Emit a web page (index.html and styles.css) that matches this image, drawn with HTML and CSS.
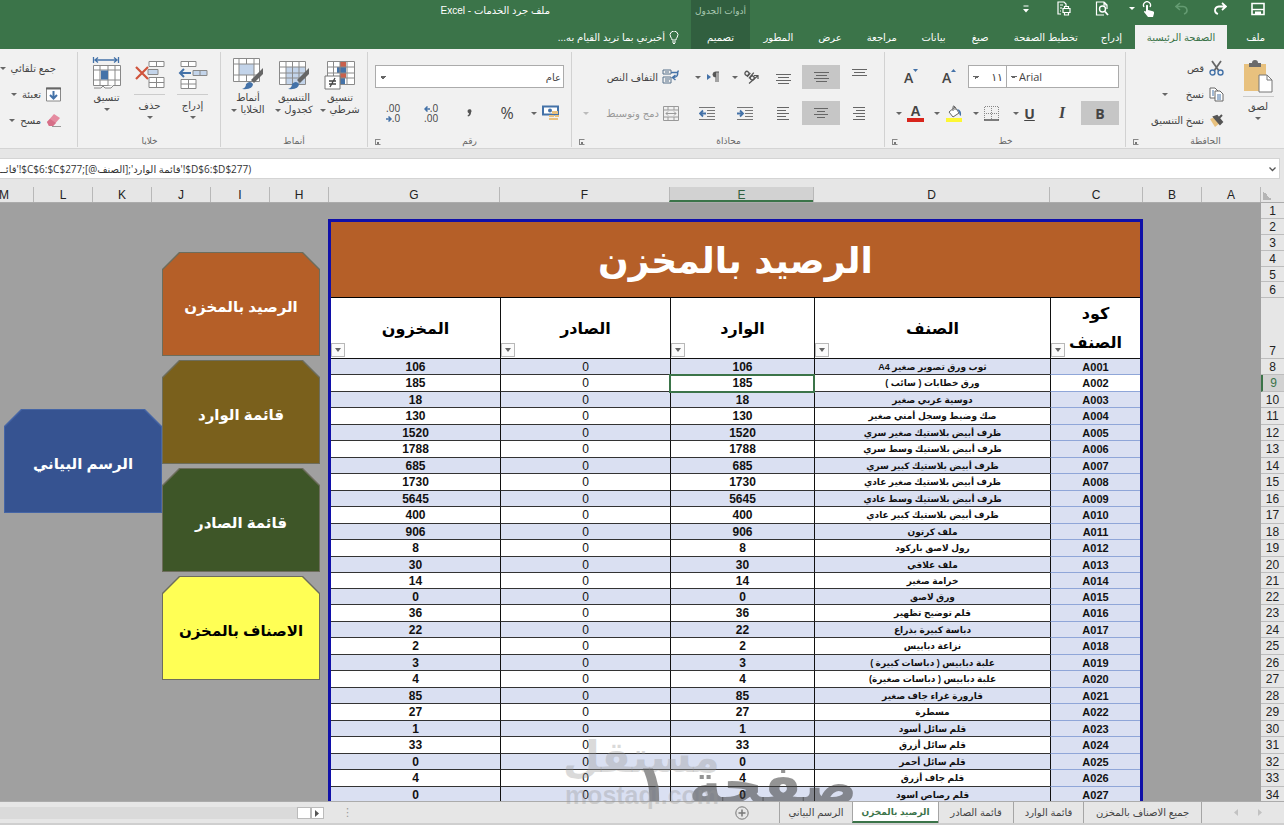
FILE: index.html
```html
<!DOCTYPE html>
<html lang="ar" dir="rtl">
<head>
<meta charset="utf-8">
<title>ملف جرد الخدمات - Excel</title>
<link rel="stylesheet" href="styles.css">
</head>
<body>
<div class="app">
<header class="top">
  <div class="qat">
    <button class="q" aria-label="حفظ"><svg width="14" height="14" viewBox="0 0 14 14"><path d="M1 1.5h12v11H1z" fill="none" stroke="#fff" stroke-width="1.6"/><path d="M1 7.5h12" stroke="#fff" stroke-width="1.4"/><path d="M4 9.5h6V13H4z" fill="#fff"/></svg></button>
    <button class="q" aria-label="إعادة"><svg width="14" height="14" viewBox="0 0 14 14"><path d="M9 1l4 3.5L9 8M13 4.500H6Q2 5 2 8.500Q2 11 5 12" fill="none" stroke="#fff" stroke-width="1.8"/></svg></button>
    <button class="q" aria-label="تراجع"><svg width="14" height="14" viewBox="0 0 14 14"><path d="M5 1L1 4.500L5 8M1 4.500H8Q12 5 12 8.500Q12 11 9 12" fill="none" stroke="#649b72" stroke-width="1.6"/></svg></button>
    <button class="q touch" aria-label="وضع اللمس"><svg width="14" height="16" viewBox="0 0 14 16"><path d="M2 6a3.500 3.500 0 1 1 6 0" fill="none" stroke="#fff" stroke-width="1.300"/><path d="M4 4.500q1-1.500 2 0V9l5 1.200q1.500.5 1 2.300L11 16H6L2 11q0-1.500 2-.5z" fill="#fff"/></svg><i class="caret"></i></button>
    <button class="q" aria-label="معاينة الطباعة"><svg width="14" height="15" viewBox="0 0 14 15"><path d="M9 1H1.500v13H9M9 1l3 3v4M9 1v3h3" fill="none" stroke="#fff" stroke-width="1.200"/><circle cx="7.500" cy="8" r="3" fill="none" stroke="#fff" stroke-width="1.400"/><path d="M10 10.500l3 3.500" stroke="#fff" stroke-width="1.800"/></svg></button>
    <button class="q" aria-label="طباعة سريعة"><svg width="14" height="15" viewBox="0 0 14 15"><path d="M4 13H1V1h6l2 2v2M3 4h3M3 7h2M3 10h1" fill="none" stroke="#fff" stroke-width="1.200"/><path d="M6 7.500h7v4H6zM7.500 7.500v-2h4v2M7.500 11v3h4v-3" fill="none" stroke="#fff" stroke-width="1.200"/></svg></button>
    <button class="q" aria-label="تخصيص"><svg width="6" height="8" viewBox="0 0 6 8"><path d="M.5 1h5" stroke="#fff"/><path d="M0 4h6L3 7.500z" fill="#fff"/></svg></button>
  </div>
  <div class="ctx ctx-name">أدوات الجدول</div>
  <h1 class="doc">ملف جرد الخدمات - Excel</h1>
  <nav class="tabs">
    <button class="tab w57">ملف</button><button class="tab w93 on">الصفحة الرئيسية</button><button class="tab w46">إدراج</button><button class="tab w85">تخطيط الصفحة</button><button class="tab w46">صيغ</button><button class="tab w46">بيانات</button><button class="tab w57">مراجعة</button><button class="tab w46">عرض</button><button class="tab w57">المطور</button>
  </nav>
  <button class="tab ctx">تصميم</button>
  <button class="tell"><svg width="10" height="13" viewBox="0 0 10 13"><path d="M3 9Q3 7.500 1.700 6A3.900 3.900 0 1 1 8.300 6Q7 7.500 7 9zM3 11h4M4 12.500h2" fill="none" stroke="#fff"/></svg>أخبرني بما تريد القيام به...</button>
</header>

<section class="ribbon">
  <div class="group g-clip">
    <div class="body side">
      <button class="big paste"><svg width="32" height="34" viewBox="0 0 32 34"><path d="M2 4h22v27H2z" fill="#e8c17e"/><path d="M7 3h3q0-3 3-3t3 3h3v4H7z" fill="#6b6b6b"/><path d="M17 15h8l5 5v12H17z" fill="#fff" stroke="#777"/><path d="M25 15v5h5" fill="none" stroke="#777"/></svg><span class="rule"></span>لصق<i class="caret"></i></button>
      <div class="stack">
        <button class="line"><svg width="15" height="16" viewBox="0 0 15 16"><path d="M3 1l7 10M12 1L5 11" stroke="#666" stroke-width="1.800"/><circle cx="3.500" cy="12.500" r="2.500" fill="none" stroke="#4472a8" stroke-width="1.400"/><circle cx="11.500" cy="12.500" r="2.500" fill="none" stroke="#4472a8" stroke-width="1.400"/></svg>قص</button>
        <button class="line"><svg width="15" height="15" viewBox="0 0 15 15"><path d="M1 1h5l3 3v7H1z" fill="#fff" stroke="#666"/><path d="M6 4h5l3 3v7H6z" fill="#fff" stroke="#666"/><path d="M3 4h2M3 6h2M3 8h2M8 8h4M8 10h4M8 12h4" stroke="#4472a8"/></svg>نسخ<i class="caret far"></i></button>
        <button class="line"><svg width="15" height="14" viewBox="0 0 15 14"><path d="M1 6l5-2 5 6-5 4z" fill="#e8c17e"/><path d="M5 4l6 7 2-2-5-6zM10 5l3-3" fill="#555" stroke="#555" stroke-width="2"/></svg>نسخ التنسيق</button>
      </div>
    </div>
    <h2 class="gname">الحافظة</h2><button class="launch" aria-label="خيارات الحافظة"></button>
  </div>

  <div class="group g-font">
    <div class="body">
      <div class="rowb">
        <select class="sel w113" dir="rtl" aria-label="الخط"><option>Arial</option></select><select class="sel w38" aria-label="حجم الخط"><option>١١</option></select>
        <button class="b gl sz" aria-label="تكبير الخط"><svg width="5" height="14" viewBox="0 0 5 14"><path d="M0 3L2.500 0L5 3z" fill="#4472a8"/></svg><span>A</span></button><button class="b gl sz" aria-label="تصغير الخط"><svg width="5" height="14" viewBox="0 0 5 14"><path d="M0 0h5L2.500 3z" fill="#4472a8"/></svg><span>A</span></button>
      </div>
      <div class="rowb">
        <button class="b on gl"><b>B</b></button><button class="b gl ser"><b>I</b></button><button class="b gl un"><b>U</b><i class="caret"></i></button>
        <button class="b" aria-label="حدود"><svg width="15" height="15" viewBox="0 0 15 15"><path d="M.5 14V.5h14V14M7.500 0v14M0 7.500h14" fill="none" stroke="#888" stroke-dasharray="1 1"/><path d="M0 14h15" stroke="#555" stroke-width="1.500"/></svg><i class="caret"></i></button>
        <button class="b" aria-label="لون التعبئة"><svg width="18" height="17" viewBox="0 0 18 17"><path d="M4 7l6-5 4 6-6 4z" fill="#fff" stroke="#666"/><path d="M8 6V1.500Q9 0 10 2v3" fill="none" stroke="#666"/><path d="M12 4q5 1 4 7-2-1-2-4z" fill="#4472a8"/><path d="M1 13h16v4H1z" fill="#fdf733"/></svg><i class="caret"></i></button>
        <button class="b" aria-label="لون الخط"><span class="fc">A</span><i class="caret"></i></button>
      </div>
    </div>
    <h2 class="gname">خط</h2><button class="launch" aria-label="خيارات الخط"></button>
  </div>

  <div class="group g-align">
    <div class="body">
      <div class="rowb">
        <button class="b up" aria-label="محاذاة لأعلى"><svg width="15" height="8" viewBox="0 0 15 8"><path d="M0 .5h15M2 3.500h11M0 6.500h15" stroke="#666"/></svg></button><button class="b on" aria-label="محاذاة للوسط"><svg width="15" height="11" viewBox="0 0 15 11"><path d="M0 .5h15M2 3.500h11M0 6.500h15M2 9.500h11" stroke="#666"/></svg></button><button class="b low" aria-label="محاذاة لأسفل"><svg width="15" height="11" viewBox="0 0 15 11"><path d="M0 .5h15M2 3.500h11M0 6.500h15M2 9.500h11" stroke="#666"/></svg></button>
        <button class="b" aria-label="اتجاه"><svg width="16" height="14" viewBox="0 0 16 14"><g transform="rotate(40 7 6)" fill="none" stroke="#555" stroke-width="1.300"><circle cx="3" cy="6" r="2"/><path d="M5.300 3.500v5"/><circle cx="10" cy="6" r="2"/><path d="M7.700 1v7.500"/></g><path d="M6 13.500L14.500 6M11 5.500h4V9" fill="none" stroke="#555" stroke-width="1.200"/></svg><i class="caret"></i></button><button class="b" aria-label="اتجاه النص"><svg width="14" height="12" viewBox="0 0 14 12"><path d="M1 3l4 3-4 3z" fill="#4472a8"/><path d="M13 1H9.500a2.500 2.500 0 0 0 0 5V1M10 1v10M12 1v10" fill="#555" stroke="#555"/></svg><i class="caret"></i></button>
        <button class="line tall"><svg width="17" height="16" viewBox="0 0 17 16"><path d="M1 1h8v4H1zM1 8h8v6H1zM3 3h4M3 10h5M3 12h4" fill="none" stroke="#56708a"/><path d="M9 3.500h5q2.500 0 2-2M15.500 3q1 5-4 5.500M13.500 6l-3 2.500 3 2.500" fill="none" stroke="#4472a8" stroke-width="1.500"/></svg>التفاف النص</button>
      </div>
      <div class="rowb">
        <button class="b" aria-label="يمين"><svg width="12" height="13" viewBox="0 0 12 13"><path d="M0 .5h12M3 3.500h9M0 6.500h12M3 9.500h9M0 12.500h12" stroke="#666"/></svg></button><button class="b on" aria-label="توسيط"><svg width="14" height="11" viewBox="0 0 14 11"><path d="M0 .5h14M3 3.500h8M0 6.500h14M3 9.500h8" stroke="#666"/></svg></button><button class="b" aria-label="يسار"><svg width="12" height="13" viewBox="0 0 12 13"><path d="M0 .5h12M0 3.500h9M0 6.500h12M0 9.500h9M0 12.500h12" stroke="#666"/></svg></button>
        <button class="b" aria-label="إنقاص المسافة"><svg width="16" height="13" viewBox="0 0 16 13"><path d="M0 .5h16M8 3.500h8M8 6.500h8M8 9.500h8M0 12.500h16" stroke="#777"/><path d="M0 6.500h6M3 3.500l3 3-3 3" fill="none" stroke="#4472a8" stroke-width="1.800"/></svg></button><button class="b" aria-label="زيادة المسافة"><svg width="16" height="13" viewBox="0 0 16 13"><path d="M0 .5h16M8 3.500h8M8 6.500h8M8 9.500h8M0 12.500h16" stroke="#777"/><path d="M7 6.500H1M4 3.500l-3 3 3 3" fill="none" stroke="#4472a8" stroke-width="1.800"/></svg></button>
        <button class="line tall dim"><svg width="16" height="15" viewBox="0 0 16 15"><path d="M.5.5h15v14H.5zM.5 4h15M.5 11h15M5 .5V4M11 .5V4M5 11v3.500M11 11v3.500M3 7.500h10M5 5.500l-2 2 2 2M11 5.500l2 2-2 2" fill="none" stroke="#999"/></svg>دمج وتوسيط<i class="caret far"></i></button>
      </div>
    </div>
    <h2 class="gname">محاذاة</h2><button class="launch" aria-label="خيارات المحاذاة"></button>
  </div>

  <div class="group g-num">
    <div class="body">
      <div class="rowb"><select class="sel w188" aria-label="تنسيق الأرقام"><option>عام</option></select></div>
      <div class="rowb">
        <button class="b" aria-label="تنسيق محاسبة"><svg width="17" height="16" viewBox="0 0 17 16"><path d="M1 1.500h15v8H1z" fill="#fff" stroke="#4472a8" stroke-width="2"/><circle cx="8" cy="5.500" r="2" fill="#4472a8"/><path d="M10 6h6v3h-6zM7 10h5v2H7zM7 13h5v2H7zM13 10h4v2h-4zM12 13h4v2h-4z" fill="#e8c17e"/></svg><i class="caret"></i></button><button class="b pct">%</button><button class="b comma" aria-label="فاصلة"><svg width="5" height="8" viewBox="0 0 5 8"><path d="M.5 2a2 2 0 1 1 3.500 1.500Q4 6.500 1 7.500L.5 6.500Q2 6 2 4.300Q.5 4 .5 2z" fill="#555"/></svg></button>
        <button class="b dec" dir="ltr"><span><svg width="6" height="6" viewBox="0 0 6 6"><path d="M6 3H1M3.500.5L1 3l2.500 2.500" fill="none" stroke="#4472a8" stroke-width="1.500"/></svg>.0<br>.00</span></button><button class="b dec" dir="ltr"><span>.00<br><svg width="6" height="6" viewBox="0 0 6 6"><path d="M0 3h5M2.500.5L5 3 2.500 5.500" fill="none" stroke="#4472a8" stroke-width="1.500"/></svg>.0</span></button>
      </div>
    </div>
    <h2 class="gname">رقم</h2><button class="launch" aria-label="خيارات الأرقام"></button>
  </div>

  <div class="group g-style">
    <div class="body side">
      <button class="big"><svg width="34" height="34" viewBox="0 0 34 34"><path d="M4 4h28v23H4z" fill="#fff"/><path d="M17 4h6v6h-6zM17 16h6v5h-6z" fill="#c9604c"/><path d="M14 10h9v6h-9zM17 21h5v6h-5z" fill="#4472a8"/><path d="M4.500 4.500h27v23h-27zM4 10h28M4 16h28M4 21h28M10.500 4v23M17 4v23M24 4v23" fill="none" stroke="#8a8a8a"/><path d="M2 19h15v13H2z" fill="#fff" stroke="#777"/><path d="M6 24h7M6 27h7M12 21l-5 9" stroke="#444" stroke-width="1.300"/></svg>تنسيق<span class="two">شرطي<i class="caret"></i></span></button>
      <button class="big"><svg width="34" height="34" viewBox="0 0 34 34"><path d="M2 4h27v23H2z" fill="#fff"/><path d="M9 10h20v17H9z" fill="#c3d4ea"/><path d="M2.500 4.500h26v23h-26zM2 10h27M2 16h27M2 21h27M9 4v23M15.500 4v23M22 4v23" fill="none" stroke="#8a8a8a"/><path d="M32 11v6l-9 9-3-3z" fill="#666"/><path d="M11 32q4-1 4-5 4-4 7 0 0 6-11 5z" fill="#4472a8"/></svg>التنسيق<span class="two">كجدول<i class="caret"></i></span></button>
      <button class="big"><svg width="34" height="34" viewBox="0 0 34 34"><path d="M2 1h27v23H2z" fill="#fff"/><path d="M8 7h15v11H8z" fill="#c3d4ea"/><path d="M2.500 1.500h26v23h-26zM2 7h27M2 18h27M8 1v23M15.500 1v6M15.500 18v6M23 1v23" fill="none" stroke="#8a8a8a"/><path d="M32 11v6l-9 9-3-3z" fill="#666"/><path d="M11 32q4-1 4-5 4-4 7 0 0 6-11 5z" fill="#4472a8"/></svg>أنماط<span class="two">الخلايا<i class="caret"></i></span></button>
    </div>
    <h2 class="gname">أنماط</h2>
  </div>

  <div class="group g-cell">
    <div class="body side">
      <button class="big n"><svg width="30" height="34" viewBox="0 0 30 34"><path d="M3 4.500h15v5H3zM10.500 4.500v5M3 22.500h15v9H3zM10.500 22v9M3 27h15" fill="#fff" stroke="#888"/><path d="M15 13.500h14v5H15zM22 13v5" fill="#c3d4ea" stroke="#888"/><path d="M13 16H2M6 12l-4 4 4 4" fill="none" stroke="#4472a8" stroke-width="2"/></svg><span class="rule"></span>إدراج<i class="caret"></i></button>
      <button class="big n"><svg width="30" height="34" viewBox="0 0 30 34"><path d="M14 4.500h15v5H14zM21.500 4.500v5M14 20.500h15v10H14zM21.500 20v10M14 25.500h15" fill="#fff" stroke="#888"/><path d="M13 12.500h10v5H13z" fill="#c3d4ea" stroke="#888"/><path d="M1 10l12 12M13 10L1 22" stroke="#d0543c" stroke-width="2.200"/></svg><span class="rule"></span>حذف<i class="caret"></i></button>
      <button class="big n"><svg width="30" height="34" viewBox="0 0 30 34"><path d="M3 3h22M1.500 0v6M26.500 0v6M6 .5L3 3l3 2.500M22 .5L25 3l-3 2.500" fill="none" stroke="#4472a8" stroke-width="1.300"/><path d="M1.500 8.500h27v20h-27zM2 13h26M2 23h26M8 8v20M16 8v20M23 8v20" fill="#fff" stroke="#888"/><path d="M9 13.500h7v9H9z" fill="#4472a8"/><path d="M2 31h7l2-2 2 2h6l3-3" fill="#fff" stroke="#888"/></svg>تنسيق<i class="caret"></i></button>
    </div>
    <h2 class="gname">خلايا</h2>
  </div>

  <div class="group g-edit">
    <div class="stack">
      <button class="line"><svg width="14" height="15" viewBox="0 0 14 15"><path d="M12.500 4V1H1.500L7 7.500 1.500 14h11V11" fill="none" stroke="#555" stroke-width="1.800"/></svg>جمع تلقائي<i class="caret"></i></button>
      <button class="line"><svg width="15" height="15" viewBox="0 0 15 15"><path d="M.5 1h14v13H.5z" fill="#fff" stroke="#888"/><path d="M0 1.500h15" stroke="#666" stroke-width="2"/><path d="M7.500 4v7M4 8l3.500 3.500L11 8" fill="none" stroke="#4472a8" stroke-width="2"/></svg>تعبئة<i class="caret"></i></button>
      <button class="line"><svg width="15" height="14" viewBox="0 0 15 14"><path d="M1 9l7-8 6 4-7 8H3z" fill="#e58ba0"/><path d="M1 9l3-3 6 4-3 3H3z" fill="#d66f88"/><path d="M6 13.500h9" stroke="#999"/></svg>مسح<i class="caret"></i></button>
    </div>
  </div>
</section>

<div class="fbar"><button class="fdrop" aria-label="توسيع شريط الصيغة"><svg width="7" height="5" viewBox="0 0 7 5"><path d="M.5.5l3 3 3-3" fill="none" stroke="#555" stroke-width="1.300"/></svg></button><input class="formula" dir="ltr" aria-label="شريط الصيغة" value="قائــ&lrm;'!$C$6:$C$277;[@الصنف&lrm;];'&lrm;قائمة الوارد'!$D$6:$D$277)"></div>

<div class="cols">
  <span class="corner"></span><span class="cw59">A</span><span class="cw59">B</span><span class="cwc">C</span><span class="cwd">D</span><span class="cwe sel-col">E</span><span class="cwf">F</span><span class="cwg">G</span><span class="cw59">H</span><span class="cw59">I</span><span class="cw59">J</span><span class="cw59">K</span><span class="cw59">L</span><span class="cw59">M</span>
</div>

<main class="sheet">
  <div class="rownums">
    <div class="head"><span>1</span><span>2</span><span>3</span><span>4</span><span>5</span><span>6</span></div>
    <div class="seven">7</div>
    <div class="nums"><span>8</span><span class="cur">9</span><span>10</span><span>11</span><span>12</span><span>13</span><span>14</span><span>15</span><span>16</span><span>17</span><span>18</span><span>19</span><span>20</span><span>21</span><span>22</span><span>23</span><span>24</span><span>25</span><span>26</span><span>27</span><span>28</span><span>29</span><span>30</span><span>31</span><span>32</span><span>33</span><span>34</span></div>
  </div>
  <div class="stock">
    <h2 class="title">الرصيد بالمخزن</h2>
    <table class="data">
      <colgroup><col class="kc"><col class="kd"><col class="ke"><col class="kf"><col class="kg"></colgroup>
      <thead><tr>
        <th><div class="th"><span>كود الصنف</span><button class="filter" aria-label="تصفية الكود"></button></div></th>
        <th><div class="th"><span>الصنف</span><button class="filter" aria-label="تصفية الصنف"></button></div></th>
        <th><div class="th"><span>الوارد</span><button class="filter" aria-label="تصفية الوارد"></button></div></th>
        <th><div class="th"><span>الصادر</span><button class="filter" aria-label="تصفية الصادر"></button></div></th>
        <th><div class="th"><span>المخزون</span><button class="filter" aria-label="تصفية المخزون"></button></div></th>
      </tr></thead>
      <tbody>
<tr><td>A001</td><td>ثوب ورق تصوير صغير A4</td><td>106</td><td>0</td><td>106</td></tr>
<tr><td>A002</td><td>ورق خطابات ( سائب )</td><td class="active">185</td><td>0</td><td>185</td></tr>
<tr><td>A003</td><td>دوسية عربي صغير</td><td>18</td><td>0</td><td>18</td></tr>
<tr><td>A004</td><td>صك وضبط وسجل أمني صغير</td><td>130</td><td>0</td><td>130</td></tr>
<tr><td>A005</td><td>ظرف أبيض بلاستيك صغير سري</td><td>1520</td><td>0</td><td>1520</td></tr>
<tr><td>A006</td><td>ظرف أبيض بلاستيك وسط سري</td><td>1788</td><td>0</td><td>1788</td></tr>
<tr><td>A007</td><td>ظرف أبيض بلاستيك كبير سري</td><td>685</td><td>0</td><td>685</td></tr>
<tr><td>A008</td><td>ظرف أبيض بلاستيك صغير عادي</td><td>1730</td><td>0</td><td>1730</td></tr>
<tr><td>A009</td><td>ظرف أبيض بلاستيك وسط عادي</td><td>5645</td><td>0</td><td>5645</td></tr>
<tr><td>A010</td><td>ظرف أبيض بلاستيك كبير عادي</td><td>400</td><td>0</td><td>400</td></tr>
<tr><td>A011</td><td>ملف كرتون</td><td>906</td><td>0</td><td>906</td></tr>
<tr><td>A012</td><td>رول لاصق باركود</td><td>8</td><td>0</td><td>8</td></tr>
<tr><td>A013</td><td>ملف علاقي</td><td>30</td><td>0</td><td>30</td></tr>
<tr><td>A014</td><td>خرامة صغير</td><td>14</td><td>0</td><td>14</td></tr>
<tr><td>A015</td><td>ورق لاصق</td><td>0</td><td>0</td><td>0</td></tr>
<tr><td>A016</td><td>قلم توضيح تظهير</td><td>36</td><td>0</td><td>36</td></tr>
<tr><td>A017</td><td>دباسة كبيرة بذراع</td><td>22</td><td>0</td><td>22</td></tr>
<tr><td>A018</td><td>نزاعة دبابيس</td><td>2</td><td>0</td><td>2</td></tr>
<tr><td>A019</td><td>علبة دبابيس ( دباسات كبيرة )</td><td>3</td><td>0</td><td>3</td></tr>
<tr><td>A020</td><td>علبة دبابيس ( دباسات صغيرة)</td><td>4</td><td>0</td><td>4</td></tr>
<tr><td>A021</td><td>قارورة غراء جاف صغير</td><td>85</td><td>0</td><td>85</td></tr>
<tr><td>A022</td><td>مسطرة</td><td>27</td><td>0</td><td>27</td></tr>
<tr><td>A023</td><td>قلم سائل أسود</td><td>1</td><td>0</td><td>1</td></tr>
<tr><td>A024</td><td>قلم سائل أزرق</td><td>33</td><td>0</td><td>33</td></tr>
<tr><td>A025</td><td>قلم سائل أحمر</td><td>0</td><td>0</td><td>0</td></tr>
<tr><td>A026</td><td>قلم جاف أزرق</td><td>4</td><td>0</td><td>4</td></tr>
<tr><td>A027</td><td>قلم رصاص اسود</td><td>0</td><td>0</td><td>0</td></tr>
      </tbody>
    </table>
    <div class="pagemark">صفحة ١</div>
  </div>
  <nav class="shapes">
    <div class="pile">
      <a class="shape" href="#"><span class="face orange">الرصيد بالمخزن</span></a>
      <a class="shape" href="#"><span class="face olive">قائمة الوارد</span></a>
      <a class="shape" href="#"><span class="face green">قائمة الصادر</span></a>
      <a class="shape" href="#"><span class="face yellow">الاصناف بالمخزن</span></a>
    </div>
    <div class="pile second">
      <a class="shape edge-blue" href="#"><span class="face blue">الرسم البياني</span></a>
    </div>
  </nav>
</main>

<footer class="bottom">
  <div class="arrows"><button aria-label="السابق"><svg width="4" height="7" viewBox="0 0 4 7"><path d="M0 0l4 3.500L0 7z" fill="#c2c2c2"/></svg></button><button aria-label="التالي"><svg width="4" height="7" viewBox="0 0 4 7"><path d="M4 0L0 3.500 4 7z" fill="#c2c2c2"/></svg></button></div>
  <button class="st s119">جميع الاصناف بالمخزن</button><button class="st s70">قائمة الوارد</button><button class="st s75">قائمة الصادر</button><button class="st s86 on">الرصيد بالمخزن</button><button class="st s73">الرسم البياني</button>
  <button class="add" aria-label="ورقة جديدة"><svg width="14" height="14" viewBox="0 0 14 14"><circle cx="7" cy="7" r="6.200" fill="none" stroke="#777"/><path d="M7 3.500v7M3.500 7h7" stroke="#777" stroke-width="1.500"/></svg></button>
  <span class="grip">⋮</span>
  <div class="hbar"><button aria-label="تمرير لليمين"><svg width="5" height="7" viewBox="0 0 5 7"><path d="M0 0l4 3.500L0 7z" fill="#555"/></svg></button><span class="thumb"></span><span class="track"></span></div>
</footer>
<div class="brand" aria-hidden="true"><div class="brand-ar">مستقل</div><div class="brand-en">mostaql.com</div></div>
</div>
</body>
</html>
```
FILE: styles.css
```css
* { box-sizing: border-box; }
body { margin: 0; font-family: "Liberation Sans", "DejaVu Sans", sans-serif; font-size: 10px; color: #444; background: #e6e6e6; }
button { font: inherit; color: inherit; background: none; border: 0; padding: 0; white-space: nowrap; }
h1, h2 { margin: 0; font: inherit; }
.app { position: relative; height: 100vh; display: flex; flex-direction: column; overflow: hidden; }

.top { display: grid; grid-template-columns: 534px 59px 1fr; grid-template-rows: 25px 24px; background: #3b7449; color: #fff; flex: none; }
.qat { display: flex; align-items: flex-start; padding-right: 7px; }
.q { width: 38px; height: 17px; display: flex; align-items: center; justify-content: center; gap: 7px; color: #fff; }
.q .caret { border-top-color: #fff; }
.touch { width: 42px; }
.ctx { background: #315f3f; text-align: center; }
.ctx-name { font-size: 9px; color: #a9c9b1; line-height: 22px; white-space: nowrap; }
.doc { font-size: 10px; line-height: 21px; padding-right: 141px; white-space: nowrap; }
.tabs { display: flex; }
.tab { font-size: 10px; color: #fff; }
.tab.on { background: #f1f1f1; color: #3b7449; }
.w57 { width: 57px; } .w93 { width: 93px; } .w46 { width: 47px; } .w85 { width: 85px; }
.tell { display: flex; align-items: center; gap: 4px; padding-right: 12px; }

.caret { display: inline-block; border: 3px solid transparent; border-top-color: #666; border-bottom-width: 0; flex: none; width: 0; height: 0; }
.ribbon { display: flex; background: #f1f1f1; height: 100px; flex: none; border-bottom: 1px solid #d4d4d4; overflow: hidden; }
.group { position: relative; flex: none; display: flex; flex-direction: column; justify-content: space-between; border-left: 1px solid #d2d2d2; margin: 3px 0 1px; padding: 0 6px 0 7px; }
.body { display: flex; flex-direction: column; gap: 12px; padding-top: 13px; }
.side { flex-direction: row; gap: 0; padding-top: 5px; }
.gname { text-align: center; line-height: 12px; font-size: 9px; color: #666; }
.launch { position: absolute; left: 7px; bottom: 2px; width: 6px; height: 6px; border: 1px solid #888; border-right-color: transparent; background: linear-gradient(#777, #777) 1px 2px / 2px 2px no-repeat; }
.g-clip { width: 159px; } .g-font { width: 241px; } .g-align { width: 313px; } .g-num { width: 204px; padding-right: 7px; } .g-style { width: 147px; padding: 0 4px; } .g-cell { width: 143px; } .g-edit { width: 77px; padding: 0 16px 0 0; border: 0; }
.rowb { display: flex; height: 24px; }
.b { width: 38px; height: 24px; display: flex; align-items: center; justify-content: center; gap: 5px; flex: none; }
.b.on { background: #c6c6c6; }
.gl { font-size: 14px; font-family: "Open Sans", sans-serif; }
.sz { gap: 0; font-weight: 600; }
.sz svg { align-self: flex-start; margin-top: 4px; }
.ser { font-family: "Liberation Serif", serif; font-style: italic; font-size: 16px; }
.un b { text-decoration: underline; }
.up { align-items: flex-start; padding-top: 4px; }
.low { align-items: flex-end; padding-bottom: 4px; }
.fc { font-weight: bold; font-size: 14px; line-height: 13px; border-bottom: 4px solid #d8251c; width: 17px; text-align: center; }
.pct { font-size: 16px; font-family: "Open Sans", sans-serif; }
.dec { font-size: 10px; line-height: 10px; font-family: "Open Sans", sans-serif; text-align: right; }
.sel { appearance: none; border: 1px solid #ababab; border-radius: 0; height: 23px; background: #fff; background-image: linear-gradient(45deg, transparent 50%, #666 50%), linear-gradient(-45deg, transparent 50%, #666 50%); background-size: 3px 3px; background-position: 4px 10px, 7px 10px; background-repeat: no-repeat; font: 11px "Open Sans", "DejaVu Sans", sans-serif; color: #444; padding: 0 6px; flex: none; }
.w113 { width: 113px; text-align: left; padding-left: 12px; } .w38 { width: 39px; padding: 0 3px; margin-right: -1px; } .w188 { width: 189px; font-size: 10px; padding: 0 2px; }
.big { width: 46px; display: flex; flex-direction: column; align-items: center; line-height: 12px; gap: 0; flex: none; }
.big.n { width: 43px; }
.big svg { margin-bottom: 1px; }
.big .caret { margin-top: 4px; }
.two { display: flex; gap: 3px; align-items: center; }
.two .caret { margin-top: 0; }
.rule { width: 31px; border-top: 1px solid #ccc; margin: 2px 0 5px; }
.paste { width: 40px; }
.paste .rule { margin: 1px 0 4px; }
.stack { display: flex; flex-direction: column; }
.g-clip .stack { padding-right: 14px; }
.g-edit .stack { padding-top: 3px; }
.line { display: flex; align-items: center; gap: 5px; height: 26px; text-align: right; }
.g-clip .side { padding-top: 3px; }
.g-clip .paste { padding-top: 5px; }
.tall { height: 24px; padding-right: 9px; gap: 4px; }
.dim { color: #999; }
.dim .caret { border-top-color: #bbb; }
.far { margin-right: 13px; }

.fbar { display: flex; margin-top: 9px; height: 21px; background: #fff; margin-right: 4px; border: 1px solid #d4d4d4; border-left: 0; flex: none; align-items: center; }
.fdrop { width: 14px; }
.formula { flex: 1; min-width: 0; border: 0; padding: 0; outline: 0; background: none; font: 10px "Open Sans", "DejaVu Sans", sans-serif; color: #333; text-align: left; }

.cols { display: flex; height: 24px; padding-top: 8px; flex: none; overflow: hidden; font-size: 12px; color: #222; border-bottom: 1px solid #ababab; }
.cols span { flex: none; text-align: center; line-height: 17px; border-left: 1px solid #b8b8b8; }
.cols .sel-col { background: #d2d2d2; border-bottom: 2px solid #3b7449; color: #315f3f; }
.cols .corner { width: 24px; background: linear-gradient(45deg, #b5b5b5 50%, transparent 50%) 2px 4px / 9px 9px no-repeat; }
.cw59 { width: 59px; } .cwc { width: 93px; } .cwd { width: 236px; } .cwe { width: 144px; } .cwf { width: 170px; } .cwg { width: 171px; }
.sheet { flex: 1; min-height: 0; display: flex; background: #a0a0a0; overflow: hidden; }
.rownums { width: 23px; background: #e6e6e6; flex: none; font-size: 12px; color: #222; text-align: center; margin-left: 118px; }
.rownums span { display: block; height: 16px; line-height: 17px; border-bottom: 1px solid #bdbdbd; }
.rownums .head span:nth-child(5) { height: 15px; }
.seven { height: 61px; padding-top: 46px; line-height: 14px; border-bottom: 1px solid #bdbdbd; }
.rownums .nums span:nth-child(even) { height: 17px; }
.rownums .nums span:nth-child(14) { height: 16px; }
.rownums .cur { background: #d2d2d2; color: #3b7449; border-left: 2px solid #3b7449; }

.stock { position: relative; flex: none; width: 815px; margin-top: 16px; border: 3px solid #1010a8; border-bottom: 0; background: #fff; }
.title { height: 76px; background: #b55f28; color: #fff; font: bold 36px/78px "DejaVu Sans", sans-serif; text-align: center; border-bottom: 1px solid #000; }
.data { width: 100%; table-layout: fixed; border-collapse: separate; border-spacing: 0; font-size: 12px; font-weight: bold; color: #111; }
.kc { width: 90px; } .kd { width: 236px; } .ke { width: 144px; } .kf { width: 170px; } .kg { width: 169px; }
.data th { padding: 0; height: 61px; border-left: 1px solid #111; border-bottom: 1px solid #111; }
.th { position: relative; height: 60px; display: flex; align-items: center; justify-content: center; font-size: 16px; line-height: 29px; color: #000; }
.data th:first-child span { width: 56px; }
.filter { position: absolute; left: 0; bottom: 1px; width: 14px; height: 14px; background: #fbfbfb; border: 1px solid #b8b8b8; display: flex; align-items: center; justify-content: center; }
.filter::after { content: ""; border: 3px solid transparent; border-top: 4px solid #666; border-bottom: 0; }
.data td { padding: 0; height: 16px; line-height: 14px; text-align: center; border-left: 1px solid #111; border-bottom: 1px solid #333; white-space: nowrap; overflow: hidden; }
.data th:last-child, .data td:last-child { border-left: 0; }
.data tr:nth-child(even) td { height: 17px; }
.data tr:nth-child(14) td { height: 16px; }
.data tr:nth-child(odd) td { background: #dae0f2; }
.data td:first-child { border-bottom-color: #8fa6d8; font-size: 11px; }
.data tr:nth-child(n+3) td:first-child { background: #dae0f2; }
.data td:nth-child(2) { font-size: 9px; }
.data td:nth-child(4) { font-weight: normal; }
.data td.active { outline: 2px solid #3b7449; outline-offset: -1px; }
.pagemark { position: absolute; left: 304px; top: 518px; font: bold 56px/90px "DejaVu Sans", sans-serif; color: rgba(60, 60, 60, .55); white-space: nowrap; }

.shapes { flex: 1; display: flex; padding: 49px 8px 0 0; font-size: 15px; font-weight: bold; }
.pile { flex: none; width: 158px; display: flex; flex-direction: column; gap: 4px; }
.second { padding-top: 157px; }
.shape { display: block; height: 104px; padding: 1px; background: #6d6d5c; color: #fff; text-decoration: none; clip-path: polygon(17px 0, 141px 0, 100% 17px, 100% 100%, 0 100%, 0 17px); }
.edge-blue { background: #4565a5; }
.face { display: flex; height: 102px; align-items: center; justify-content: center; padding-top: 6px; white-space: nowrap; clip-path: polygon(17px 0, 139px 0, 100% 17px, 100% 100%, 0 100%, 0 17px); }
.orange { background: #b55f28; } .olive { background: #7a601c; } .green { background: #3e5628; } .yellow { background: #ffff55; color: #000; } .blue { background: #365391; }

.bottom { flex: none; height: 24px; display: flex; background: #e6e6e6; border-top: 1px solid #ababab; border-bottom: 2px solid #cfcfcf; }
.arrows { width: 82px; display: flex; gap: 20px; padding-right: 22px; }
.st { flex: none; border-left: 1px solid #a5a5a5; height: 21px; }
.st.on { background: #fff; color: #3b7449; font-weight: bold; border-bottom: 2px solid #3b7449; font-size: 9px; }
.s119 { width: 119px; border-right: 1px solid #a5a5a5; } .s70 { width: 70px; } .s75 { width: 75px; } .s86 { width: 86px; } .s73 { width: 73px; }
.add { margin-right: 30px; display: flex; align-items: center; }
.grip { margin-right: auto; font-size: 11px; line-height: 21px; color: #999; }
.hbar { display: flex; width: 342px; padding: 5px 18px 4px 0; }
.hbar button { width: 13px; border: 1px solid #bbb; background: #fff; display: flex; align-items: center; justify-content: center; flex: none; }
.thumb { width: 14px; background: #fff; border: 1px solid #bbb; flex: none; }
.track { flex: 1; background: #dadada; }

.brand { position: absolute; left: 564px; bottom: 18px; width: 156px; color: rgba(150, 150, 150, .34); text-align: center; font-weight: bold; pointer-events: none; }
.brand-ar { font: bold 43px/52px "DejaVu Sans", sans-serif; }
.brand-en { font-size: 25px; line-height: 24px; }
```
